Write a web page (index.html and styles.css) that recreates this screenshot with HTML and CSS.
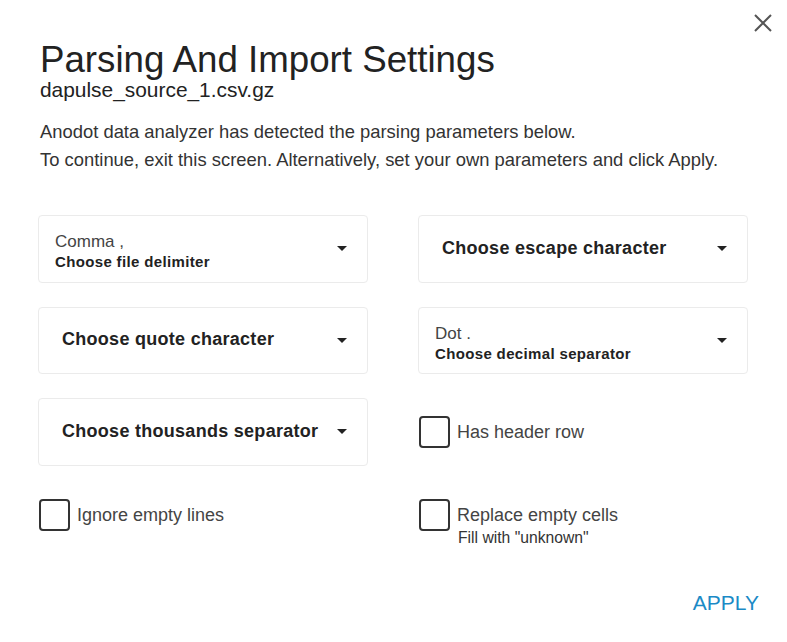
FILE: index.html
```html
<!DOCTYPE html>
<html>
<head>
<meta charset="utf-8">
<link rel="stylesheet" href="styles.css">
</head>
<body>
<div class="dialog">
  <button class="close" aria-label="Close">
    <svg width="18" height="18" viewBox="0 0 18 18"><path d="M1 1L17 17M17 1L1 17" stroke="#555" stroke-width="2" fill="none"/></svg>
  </button>
  <div class="head">
    <h1 class="title">Parsing And Import Settings</h1>
    <div class="subtitle">dapulse_source_1.csv.gz</div>
    <p class="desc">Anodot data analyzer has detected the parsing parameters below.<br>To continue, exit this screen. Alternatively, set your own parameters and click Apply.</p>
  </div>

  <div class="grid">
    <div class="select">
      <div class="select-text">
        <div class="value">Comma ,</div>
        <div class="label">Choose file delimiter</div>
      </div>
      <span class="caret"></span>
    </div>
    <div class="select">
      <div class="placeholder">Choose escape character</div>
      <span class="caret"></span>
    </div>
    <div class="select">
      <div class="placeholder">Choose quote character</div>
      <span class="caret"></span>
    </div>
    <div class="select">
      <div class="select-text">
        <div class="value">Dot .</div>
        <div class="label">Choose decimal separator</div>
      </div>
      <span class="caret"></span>
    </div>
    <div class="select">
      <div class="placeholder">Choose thousands separator</div>
      <span class="caret"></span>
    </div>
    <div class="check-cell">
      <span class="checkbox"></span>
      <span class="check-label">Has header row</span>
    </div>
    <div class="check-cell top">
      <span class="checkbox"></span>
      <span class="check-label">Ignore empty lines</span>
    </div>
    <div class="check-cell top">
      <span class="checkbox"></span>
      <div>
        <div class="check-label">Replace empty cells</div>
        <div class="check-sub">Fill with "unknown"</div>
      </div>
    </div>
  </div>

  <div class="footer">
    <button class="apply">APPLY</button>
  </div>
</div>
</body>
</html>
```
FILE: styles.css
```css
html, body {
  margin: 0;
  padding: 0;
  background: #fff;
}
body {
  font-family: "Liberation Sans", Arial, sans-serif;
  color: #222;
}
.dialog {
  position: relative;
  width: 787px;
  height: 642px;
  box-sizing: border-box;
  padding: 40px 0 0 38px;
}
.close {
  position: absolute;
  top: 14px;
  left: 754px;
  width: 18px;
  height: 18px;
  padding: 0;
  border: 0;
  background: none;
  display: block;
}
.close svg { display: block; }
.head {
  padding-left: 2px;
}
.title {
  margin: 0;
  font-weight: normal;
  font-size: 36.7px;
  line-height: 40px;
  color: #222;
}
.subtitle {
  font-size: 20.9px;
  line-height: 22px;
  color: #222;
  margin-top: -1px;
}
.desc {
  margin: 17px 0 0 0;
  font-size: 18.4px;
  line-height: 28px;
  color: #333;
}
.grid {
  margin-top: 41px;
  display: grid;
  grid-template-columns: 330px 330px;
  column-gap: 50px;
  row-gap: 24px;
  grid-auto-rows: 67.5px;
}
.select {
  box-sizing: border-box;
  height: 67.5px;
  border: 1px solid #ebebeb;
  border-radius: 4px;
  display: flex;
  align-items: center;
  padding: 0 20px 0 16px;
}
.select-text {
  flex: 1;
  padding-top: 7px;
}
.value {
  font-size: 17px;
  line-height: 20px;
  color: #444;
}
.label {
  font-size: 15px;
  line-height: 20px;
  font-weight: bold;
  color: #222;
  letter-spacing: 0.35px;
}
.placeholder {
  flex: 1;
  padding-left: 7px;
  padding-bottom: 2px;
  font-size: 18px;
  line-height: 20px;
  font-weight: bold;
  color: #222;
  letter-spacing: 0.28px;
}
.caret {
  width: 0;
  height: 0;
  border-left: 5px solid transparent;
  border-right: 5px solid transparent;
  border-top: 5px solid #222;
}
.check-cell {
  display: flex;
  align-items: center;
  padding-left: 1px;
}
.check-cell.top {
  align-items: flex-start;
  padding-top: 9px;
}
.checkbox {
  box-sizing: border-box;
  width: 31px;
  height: 32px;
  border: 2px solid #333;
  border-radius: 4px;
  flex: none;
  margin-right: 7px;
}
.check-label {
  font-size: 18px;
  line-height: 32px;
  color: #444;
}
.check-sub {
  font-size: 15.7px;
  line-height: 16px;
  color: #333;
  margin-top: -1px;
  padding-left: 1px;
}
.footer {
  display: flex;
  justify-content: flex-end;
  padding-right: 28px;
  margin-top: 36px;
}
.apply {
  border: 0;
  background: none;
  padding: 0;
  font-family: "Liberation Sans", Arial, sans-serif;
  font-size: 21px;
  line-height: 20px;
  color: #1b8ac6;
}
```
